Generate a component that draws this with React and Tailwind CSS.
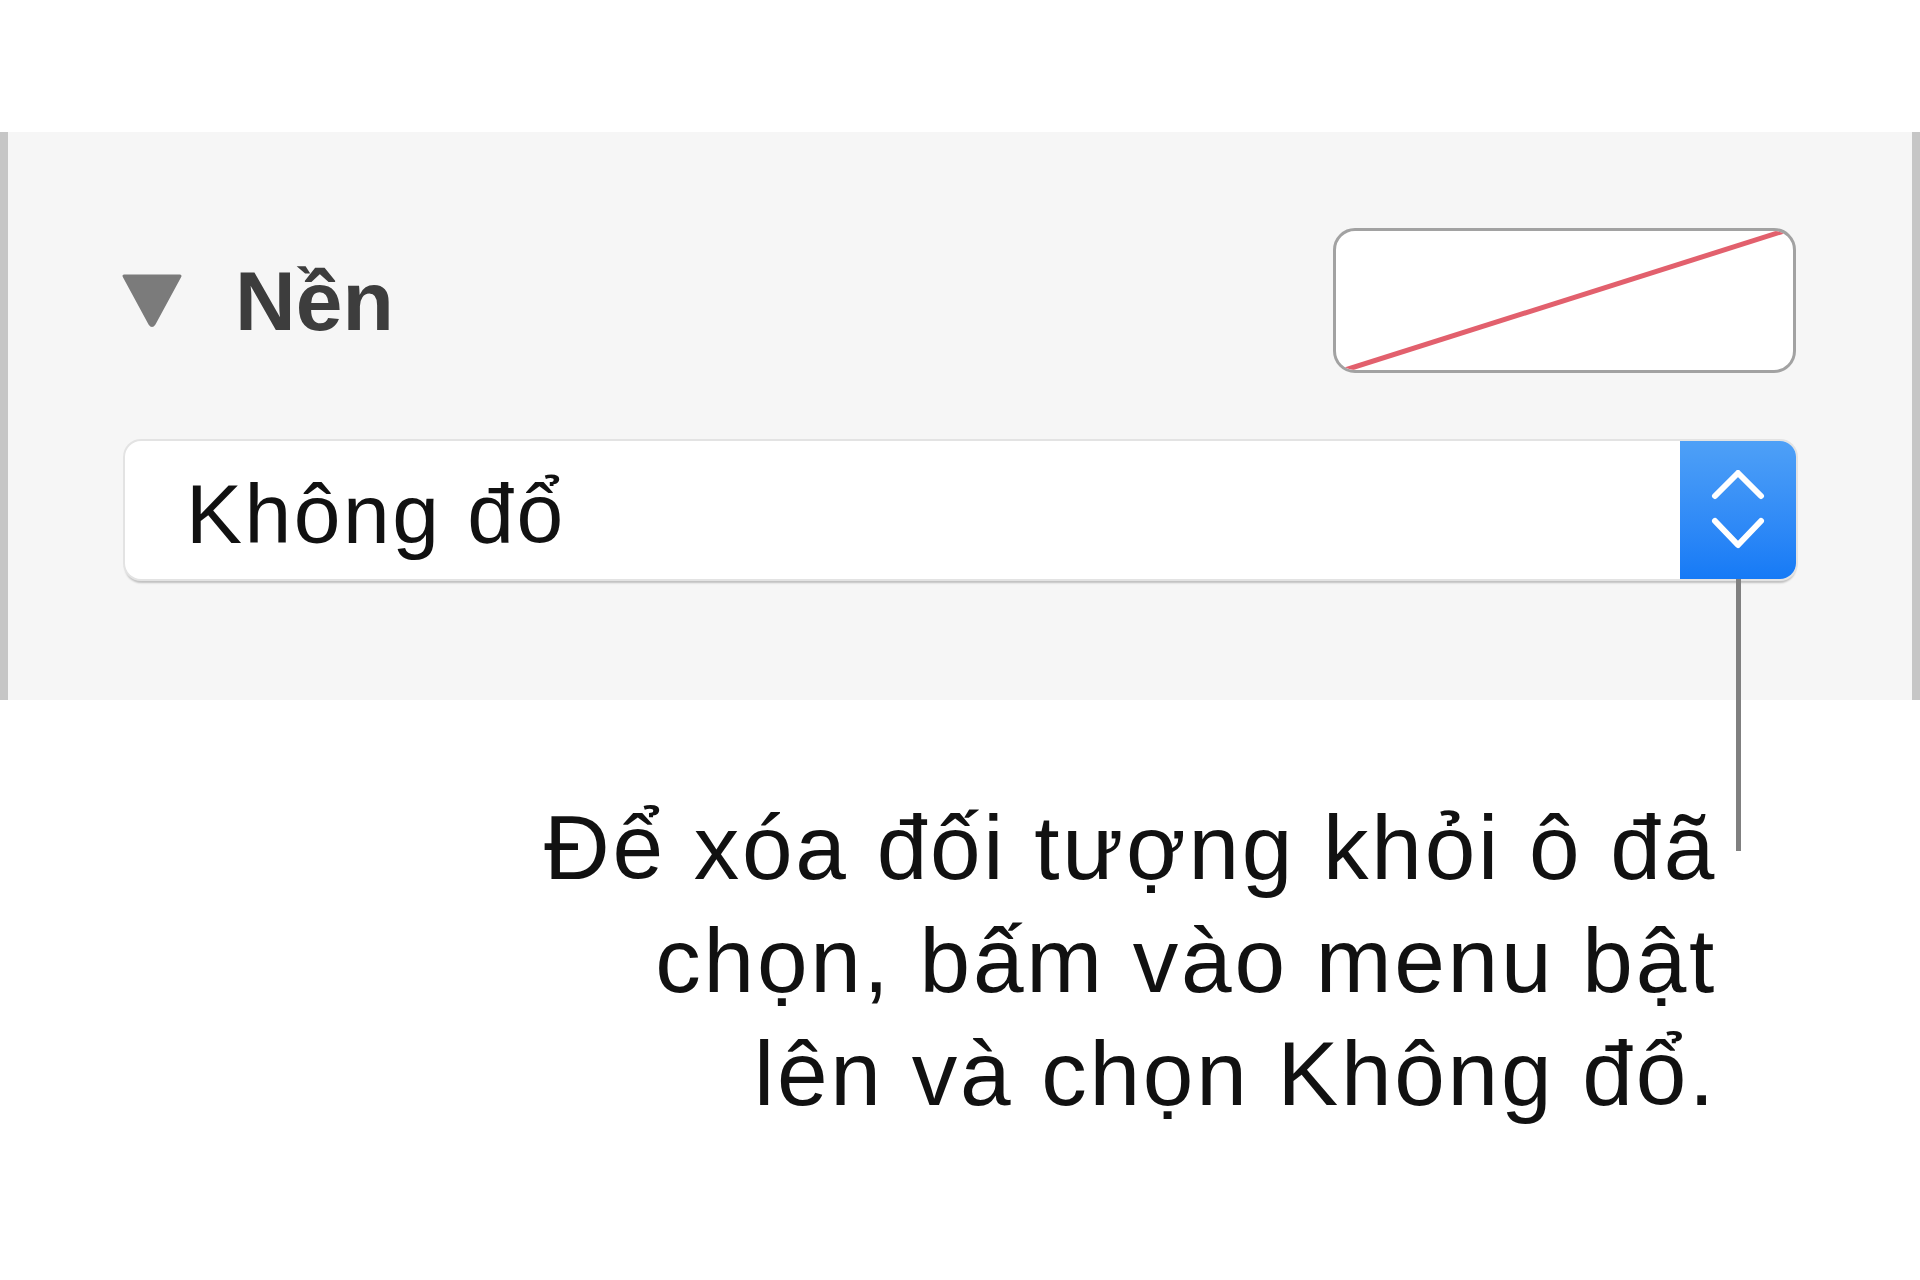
export default function App() {
  return (
    <div className="min-h-screen bg-white font-['Liberation_Sans','Noto_Sans','DejaVu_Sans',sans-serif]">
      <div className="h-[132px]" />

      {/* inspector section: Nền */}
      <section className="h-[568px] bg-[#f6f6f6] border-x-8 border-[#c6c6c6] pl-[117px] pr-[116px] pt-[96px]">
        <div className="flex items-center justify-between h-[145px]">
          <div className="flex items-center gap-[51px] -ml-[5px]">
            <svg width="64" height="56" viewBox="0 0 64 56">
              <path
                d="M4 3 H60 L34 51 Q32 54 30 51 Z"
                fill="#7b7b7b"
                stroke="#7b7b7b"
                strokeWidth="3"
                strokeLinejoin="round"
              />
            </svg>
            <span className="text-[84px] font-bold leading-none text-[#3d3d3d]">Nền</span>
          </div>

          <div className="relative w-[463px] h-[145px] rounded-[22px] border-[3px] border-[#a2a2a2] bg-white overflow-hidden">
            <svg className="absolute inset-0 w-full h-full" viewBox="0 0 100 100" preserveAspectRatio="none">
              <line
                x1="2"
                y1="100"
                x2="98"
                y2="0"
                stroke="#e2606d"
                strokeWidth="5"
                vectorEffect="non-scaling-stroke"
              />
            </svg>
          </div>
        </div>

        <div className="mt-[68px] flex h-[138px] rounded-[16px] bg-white ring-2 ring-[#e3e3e3] shadow-[0_4px_2px_rgba(0,0,0,0.22)]">
          <div className="flex-1 flex items-center pl-[61px] pt-[8px] text-[84px] tracking-[0.03em] text-[#111]">
            Không đổ
          </div>
          <div className="relative w-[116px] rounded-r-[16px] bg-linear-to-b from-[#4ea0f7] to-[#157af6] flex items-center justify-center">
            <svg width="56" height="80" viewBox="0 0 56 80">
              <path d="M5 26 L28 3 L51 26" fill="none" stroke="#fff" strokeWidth="6" strokeLinecap="round" strokeLinejoin="round" />
              <path d="M5 51 L28 75 L51 51" fill="none" stroke="#fff" strokeWidth="6" strokeLinecap="round" strokeLinejoin="round" />
            </svg>
            <div className="absolute left-[56px] top-full w-[5px] h-[272px] bg-[#808080]" />
          </div>
        </div>
      </section>

      <div className="flex justify-end pr-[203px] pt-[91px]">
        <p className="text-right text-[91px] leading-[113px] tracking-[0.03em] text-[#111]">
          Để xóa đối tượng khỏi ô đã
          <br />
          chọn, bấm vào menu bật
          <br />
          lên và chọn Không đổ.
        </p>
      </div>
    </div>
  );
}
